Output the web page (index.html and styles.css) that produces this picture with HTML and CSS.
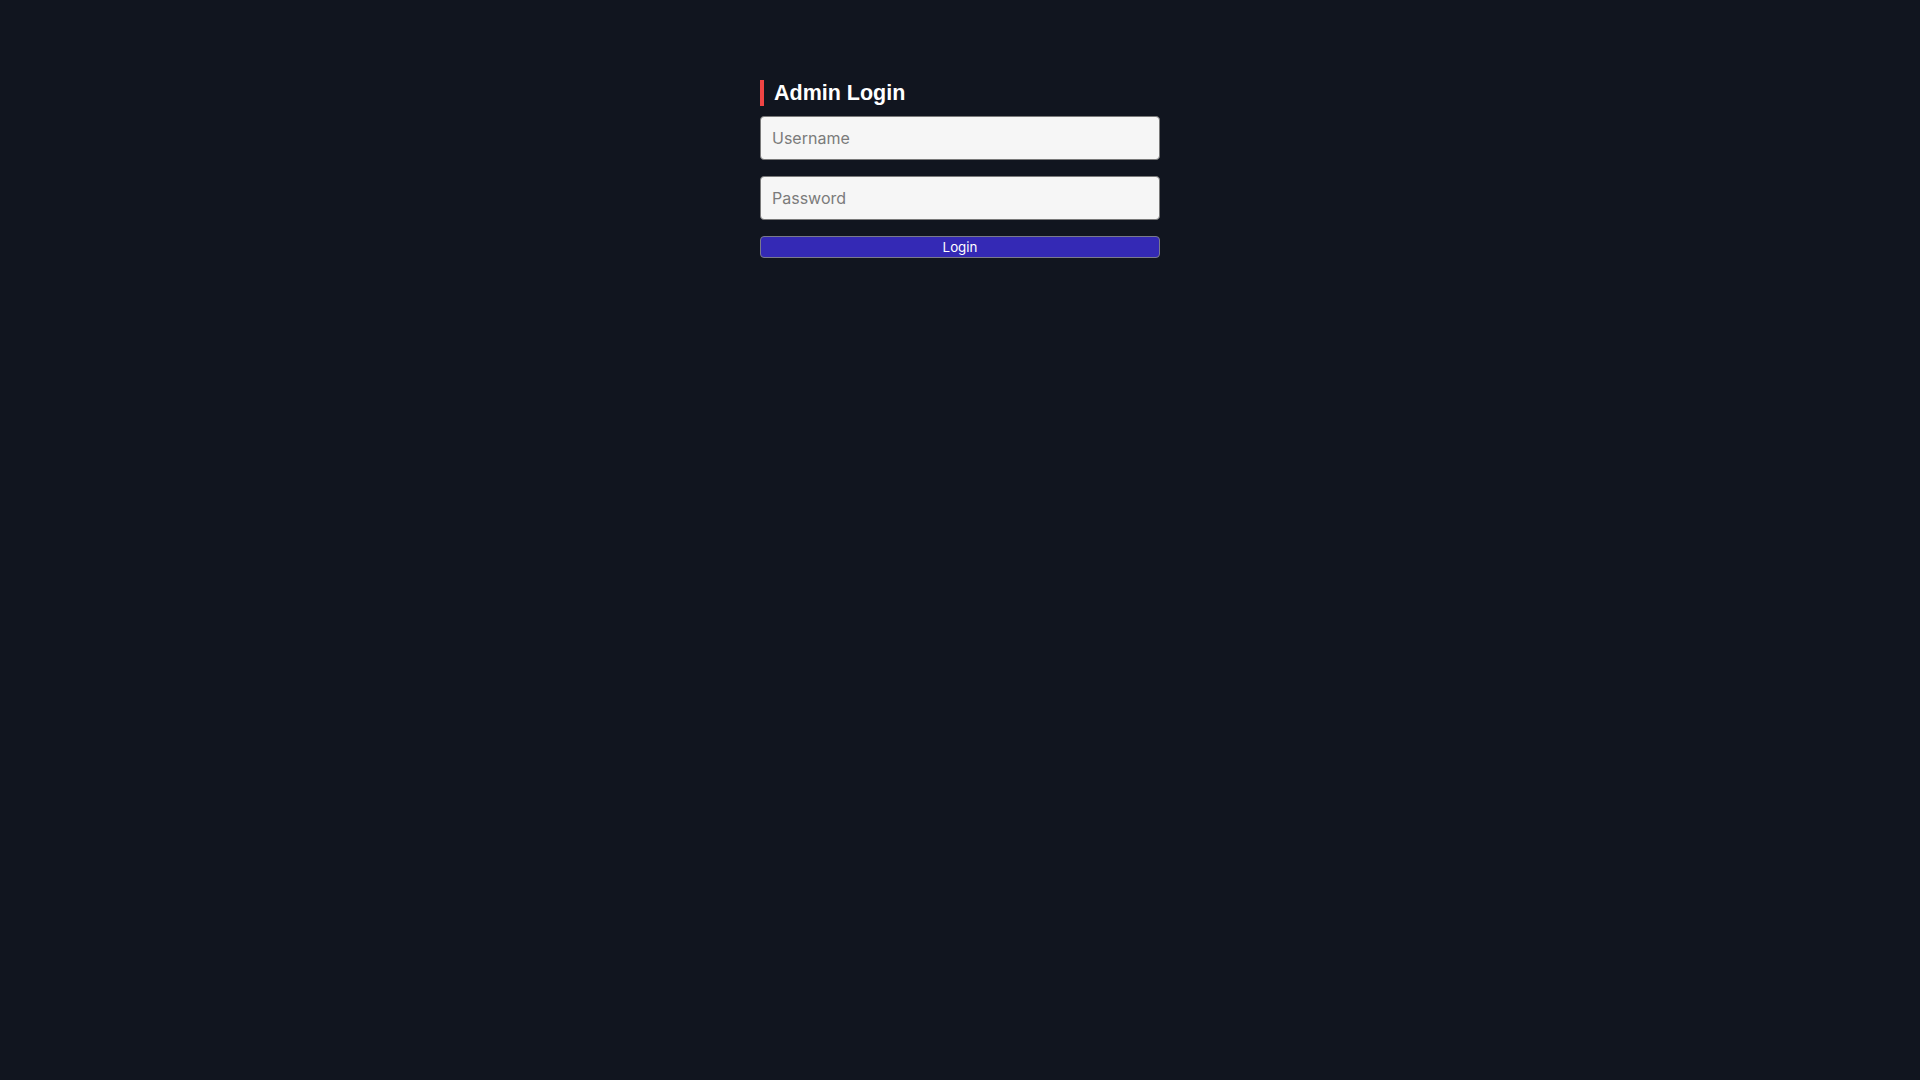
FILE: index.html
```html
<!DOCTYPE html>
<html lang="en">
<head>
<meta charset="utf-8">
<title>Admin Login</title>
<link rel="stylesheet" href="styles.css">
</head>
<body>
<main class="login">
  <h1 class="login-title">Admin Login</h1>
  <form class="login-form">
    <input class="field" type="text" placeholder="Username">
    <input class="field" type="password" placeholder="Password">
    <button class="login-btn" type="button">Login</button>
  </form>
</main>
</body>
</html>
```
FILE: styles.css
```css
html, body {
  margin: 0;
  padding: 0;
  background: #11151f;
  height: 100%;
}
body {
  font-family: Inter, "Liberation Sans", sans-serif;
}
.login {
  width: 400px;
  margin: 80px auto 0;
}
.login-title {
  margin: 0 0 10px;
  border-left: 4px solid #ef4444;
  padding-left: 10px;
  height: 26px;
  line-height: 26px;
  font-family: "Liberation Sans", Arial, sans-serif;
  font-weight: bold;
  font-size: 21.5px;
  color: #ffffff;
}
.login-form {
  display: flex;
  flex-direction: column;
  gap: 16px;
}
.field {
  box-sizing: border-box;
  width: 100%;
  height: 44px;
  margin: 0;
  padding: 0 11px;
  border: 1px solid #7a7a7a;
  border-radius: 4px;
  background: #f6f6f6;
  font-family: Inter, sans-serif;
  font-size: 16px;
  color: #222;
  outline: none;
}
.field::placeholder {
  color: #7b7b7b;
}
.login-btn {
  box-sizing: border-box;
  width: 100%;
  height: 22px;
  margin: 0;
  padding: 0 6px;
  border: 1px solid #7a7a8a;
  border-radius: 4px;
  background: #3429b5;
  color: #ffffff;
  font-family: Inter, sans-serif;
  font-size: 13.33px;
  line-height: 20px;
  cursor: pointer;
}
```
